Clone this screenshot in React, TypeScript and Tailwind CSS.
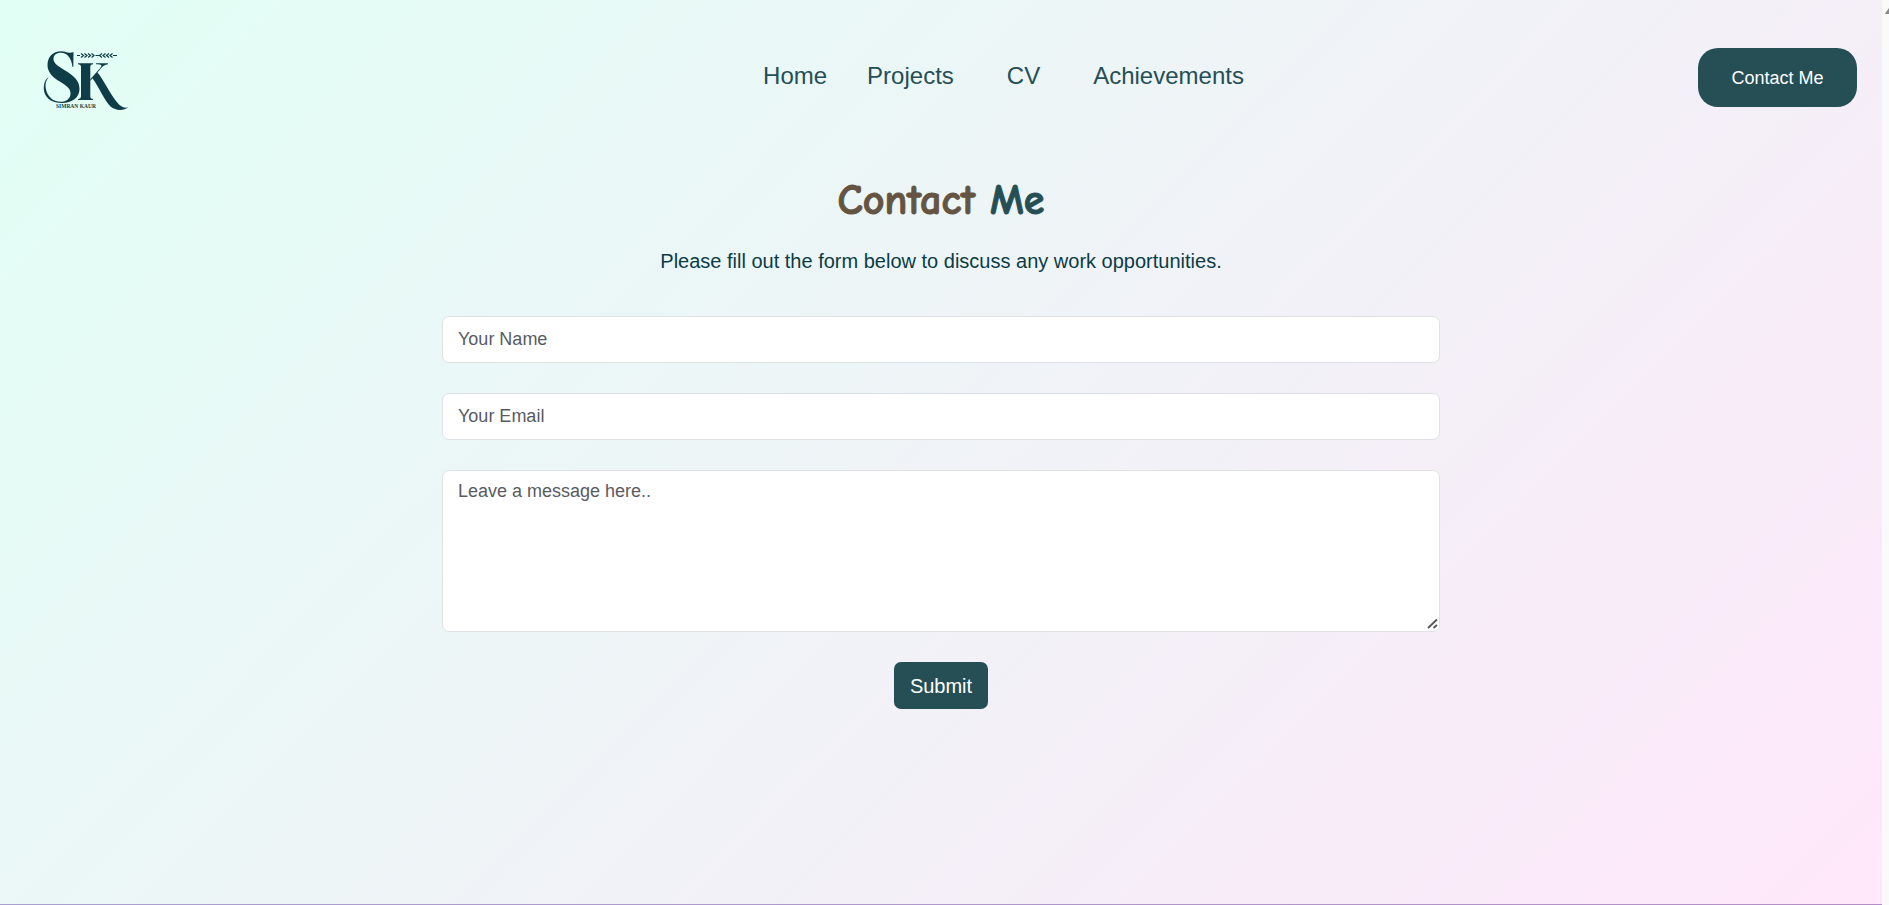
import type { ReactNode } from "react";

function NavLink({ children, className }: { children: ReactNode; className: string }) {
  return (
    <a href="#" className={`text-2xl leading-9 text-[#254f55] ${className}`}>
      {children}
    </a>
  );
}

function Logo() {
  return (
    <svg viewBox="0 0 110 80" width="110" height="80" role="img" aria-label="Simran Kaur" fill="#0f3d47">
      <path d="M43.500 12L43.300 27H42.500C41.500 18 37 12.800 31 12.800C26 12.800 23.500 15.500 23.500 19C23.500 24 29 26.500 36 31C44.500 36.500 49.500 41 49.500 49C49.500 57.500 42 63 32 63C21 63 13.800 57 13.800 48.500C13.800 43 15.500 39 18.500 37.300C16 40.500 15 44 15.700 48C17 56.500 23 61.800 30.500 61.800C36.500 61.800 40.500 58.500 40.500 53.500C40.500 47.500 35 45 28 40.500C21 36 17.500 31 17.500 25C17.500 17 23 11.300 31 11.300C35 11.300 37 12.700 39.500 12.700C41 12.700 42.500 12.500 43.500 12Z" />
      <path d="M48 23.200H63V24.200C61 24.400 60.300 25.300 60.300 27V56C60.300 58 61 58.700 63 59V60H48V59C50 58.700 51 58 51 56V27C51 25.200 50 24.400 48 24.200Z" />
      <path d="M66 23.200H78V24.200C75 24.400 73 26 71 28.300L67.500 32.500C74.500 41 79.500 53 86 61C90 66 93 68.600 98.500 67.300C94 70.600 86 71.200 80.500 66.500C74 60 69 47 62.500 38.300L60.300 41V39.300L70 28.300C73 25 71.500 24.400 66 24.200Z" />
      <path d="M47 15.500H50M51 13.500L53.500 15.500L51 17.500M54.500 13.500L57 15.500L54.500 17.500M58 13.500L60.500 15.500L58 17.500M61.500 13.500L64 15.500L61.500 17.500M72 13.500L69.500 15.500L72 17.500M75.500 13.500L73 15.500L75.500 17.500M79 13.500L76.500 15.500L79 17.500M82.500 13.500L80 15.500L82.500 17.500M65.500 15.500H69M83 15.500H87" fill="none" stroke="#0f3d47" strokeWidth="1.200" />
      <text x="26" y="68" fontSize="5.500" fontWeight="700" fontFamily="Liberation Serif, serif">SIMRAN KAUR</text>
    </svg>
  );
}

const field =
  "block w-full rounded-[7px] border border-[#dee2e6] bg-white px-[15px] text-lg leading-[27px] text-[#212529] placeholder:text-[#595c5f] placeholder:opacity-100";

export default function App() {
  return (
    <div className="flex min-h-screen bg-[#fafafa] font-['Liberation_Sans',Arial,sans-serif]">
      <div className="flex min-w-0 flex-1 flex-col">
        <div className="flex-1 bg-[linear-gradient(135deg,#e1fff5,#fee7f9)]">
          <header className="flex items-start justify-between pt-10 pr-[25px] pl-[30px]">
            <a href="#" className="w-[159px]"><Logo /></a>
            <nav className="flex pt-[18px] pl-[120px]">
              <NavLink className="mr-10">Home</NavLink>
              <NavLink className="mr-[53px]">Projects</NavLink>
              <NavLink className="mr-[53px]">CV</NavLink>
              <NavLink className="">Achievements</NavLink>
            </nav>
            <button className="mt-2 h-[59px] w-[159px] rounded-[20px] bg-[#254f55] text-lg text-white">Contact Me</button>
          </header>
          <main className="mx-auto flex w-full max-w-[998px] flex-col items-center pt-14">
            <h1 className="font-['Comic_Sans_MS','Comic_Neue',cursive] text-[42px] leading-[50px] font-bold text-[#645441] [-webkit-text-stroke:1px_currentColor]">
              Contact <span className="text-[#254f55]">Me</span>
            </h1>
            <p className="mt-5 text-xl leading-[30px] text-[#0b3c45]">Please fill out the form below to discuss any work opportunities.</p>
            <form className="mt-10 flex w-full flex-col items-center gap-[30px]">
              <input aria-label="Your Name" placeholder="Your Name" className={`${field} h-[47px]`} />
              <input type="email" aria-label="Your Email" placeholder="Your Email" className={`${field} h-[47px]`} />
              <div className="relative w-full">
                <textarea aria-label="Message" placeholder="Leave a message here.." className={`${field} h-[162px] resize-y py-[7px]`} />
                <svg viewBox="0 0 14 14" width="14" height="14" className="pointer-events-none absolute right-px bottom-0.5" aria-hidden="true">
                  <path d="M0 0H14V10Q14 14 10 14H0Z" fill="#fff" />
                  <path d="M3 12L12 3.500M8.500 12L12 9" stroke="#555" strokeWidth="1.800" />
                </svg>
              </div>
              <button type="submit" className="h-[47px] rounded-[7px] bg-[#254f55] px-4 text-xl text-white">Submit</button>
            </form>
          </main>
        </div>
        <div className="h-px bg-linear-to-r from-[#a9a0cf] to-[#b48fc6]" />
      </div>
      <div className="w-[7px] overflow-hidden pt-2">
        <svg viewBox="0 0 7 7" width="7" height="7" aria-hidden="true">
          <path d="M3 5.500L7 0V6H3.500Z" fill="#8b8b8b" />
        </svg>
      </div>
    </div>
  );
}
